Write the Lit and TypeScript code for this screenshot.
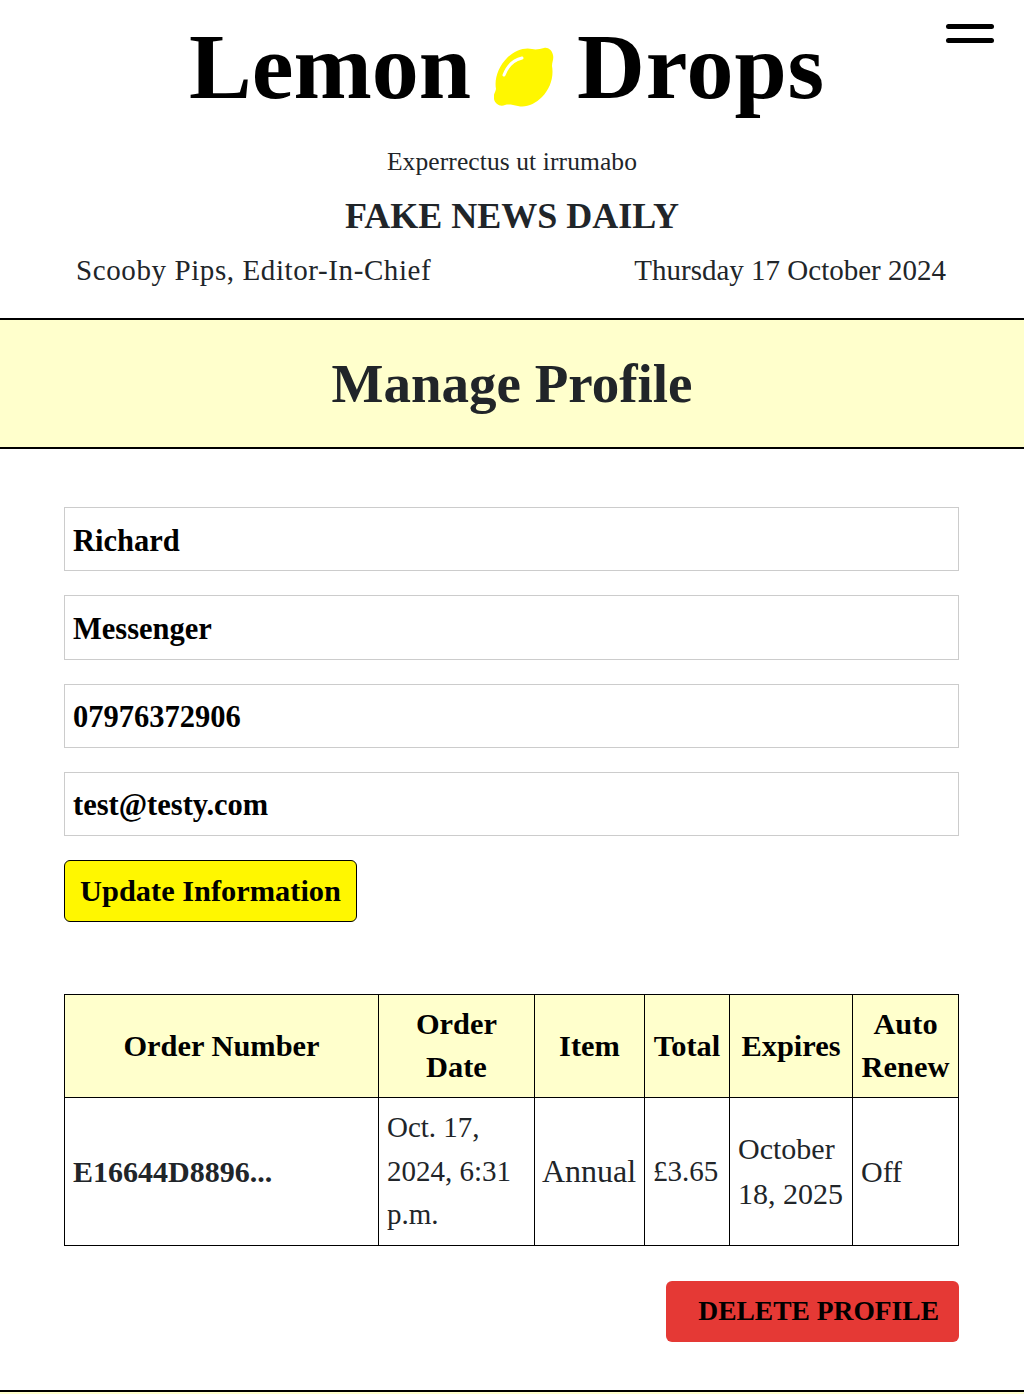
import { LitElement, html, css } from "lit";
import { customElement } from "lit/decorators.js";

@customElement("app-root")
export class AppRoot extends LitElement {
  static styles = css`
    :host { display: block; height: 1394px; overflow: hidden; background: #fff; color: #212529; font-family: "Liberation Serif", "Times New Roman", serif; position: relative; }
    * { box-sizing: border-box; }
    header { height: 318px; display: flex; flex-direction: column; align-items: center; }
    .menu { position: absolute; top: 24px; left: 946px; width: 48px; display: flex; flex-direction: column; gap: 9px; }
    .menu span { height: 5px; background: #000; border-radius: 3px; }
    .title { margin: 0 10px 0 0; height: 146px; padding-top: 14px; display: flex; align-items: flex-start; gap: 23px; color: #000; font-size: 94px; line-height: 104px; font-weight: 700; }
    .title svg { width: 60px; height: 60px; margin-top: 33px; flex: none; }
    .drops { letter-spacing: 0.8px; }
    .motto { font-size: 25.5px; line-height: 32px; height: 45px; letter-spacing: 0.1px; }
    .paper { font-size: 36px; line-height: 50px; height: 62px; font-weight: 700; margin: 0; }
    .meta { width: 100%; display: flex; justify-content: space-between; padding: 0 78px 0 76px; font-size: 29px; line-height: 34px; }
    .editor { letter-spacing: 0.6px; }
    .band { height: 131px; background: #ffffcc; border-top: 2px solid #000; border-bottom: 2px solid #000; display: flex; align-items: center; justify-content: center; }
    .band h1 { margin: 0; font-size: 55px; font-weight: 700; line-height: 1; }
    main { padding: 58px 65px 0 64px; display: flex; flex-direction: column; }
    form { display: flex; flex-direction: column; gap: 24px; }
    .field { height: 64.25px; border: 1px solid #ccc; padding: 4px 8px 0; display: flex; align-items: center; font-size: 30.5px; font-weight: 700; color: #000; }
    .update { align-self: flex-start; height: 62px; width: 293px; background: #fff700; border: 1px solid #000; border-radius: 6px; color: #000; font: 700 30.4px "Liberation Serif", serif; padding: 0; }
    table { margin-top: 72px; width: 894px; table-layout: fixed; border-collapse: collapse; font-size: 30px; line-height: 43.5px; }
    td, th { border: 1px solid #000; padding: 8px; vertical-align: middle; overflow: hidden; }
    th { background: #ffffcc; color: #000; text-align: center; font-weight: 700; font-size: 30.4px; line-height: 43px; height: 103px; }
    td { height: 146.5px; }
    .c1 { width: 314px; } .c2 { width: 156px; } .c3 { width: 110px; } .c4 { width: 85px; } .c5 { width: 123px; } .c6 { width: 106px; }
    .bold { font-weight: 700; white-space: nowrap; }
    .small { font-size: 29px; }
    .annual { font-size: 32px; padding: 8px 7px; white-space: nowrap; }
    .expires { line-height: 45px; }
    .actions { display: flex; justify-content: flex-end; margin-top: 35px; }
    .delete { width: 293px; height: 61px; background: #e53935; border: 0; border-radius: 6px; font: 700 27.5px "Liberation Serif", serif; color: #000; padding: 0 20px 0 0; text-align: right; }
    footer { position: absolute; left: 0; right: 0; top: 1390px; height: 4px; background: #ffffcc; border-top: 2px solid #000; }
  `;

  render() {
    return html`
      <header>
        <div class="menu"><span></span><span></span></div>
        <div class="title">
          <span>Lemon</span>
          <svg viewBox="0 0 60 60" aria-hidden="true">
            <path fill="#fff700" d="M50 1C54 0 58 3 59 8C60 12 58 15 58 19C60 30 56 42 48 50C41 57 32 61 24 59C19 58 15 57 11 58C6 60 1 57 0 52C-1 48 1 46 2 42C0 31 5 19 13 11C20 4 30 0 38 2C42 3 46 2 50 1Z"/>
            <path fill="none" stroke="#fff" stroke-width="3" stroke-linecap="round" d="M28 11C19 13 13 20 10 28"/>
          </svg>
          <span class="drops">Drops</span>
        </div>
        <div class="motto">Experrectus ut irrumabo</div>
        <h2 class="paper">FAKE NEWS DAILY</h2>
        <div class="meta"><span class="editor">Scooby Pips, Editor-In-Chief</span><span>Thursday 17 October 2024</span></div>
      </header>
      <section class="band"><h1>Manage Profile</h1></section>
      <main>
        <form>
          <div class="field">Richard</div>
          <div class="field">Messenger</div>
          <div class="field">07976372906</div>
          <div class="field">test@testy.com</div>
          <button class="update" type="button">Update Information</button>
        </form>
        <table>
          <colgroup><col class="c1" /><col class="c2" /><col class="c3" /><col class="c4" /><col class="c5" /><col class="c6" /></colgroup>
          <thead><tr><th>Order Number</th><th>Order Date</th><th>Item</th><th>Total</th><th>Expires</th><th>Auto Renew</th></tr></thead>
          <tbody><tr>
            <td class="bold">E16644D8896...</td>
            <td class="small">Oct. 17, 2024, 6:31 p.m.</td>
            <td class="annual">Annual</td>
            <td class="small">£3.65</td>
            <td class="expires">October 18, 2025</td>
            <td>Off</td>
          </tr></tbody>
        </table>
        <div class="actions"><button class="delete" type="button">DELETE PROFILE</button></div>
      </main>
      <footer></footer>
    `;
  }
}
